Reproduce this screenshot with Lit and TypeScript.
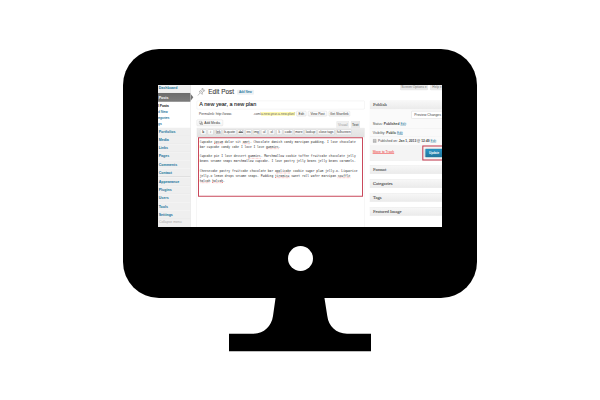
import { LitElement, html, css, svg } from "lit";
import { customElement } from "lit/decorators.js";
import { classMap } from "lit/directives/class-map.js";

const MENU_TOP = ["Portfolios", "Media", "Links", "Pages", "Comments", "Contact"];
const MENU_BOTTOM = ["Appearance", "Plugins", "Users", "Tools", "Settings"];

@customElement("admin-menu")
class AdminMenu extends LitElement {
  static styles = css`
    :host { display: block; width: 98px; height: 427px; background: #efefef; box-sizing: border-box;
      border-right: 1px solid #d8d8d8; color: #21759b; font-size: 10.8px; font-weight: bold; }
    .item { height: 24.4px; line-height: 24.4px; padding-left: 2px; box-sizing: border-box;
      border-top: 1px solid #f9f9f9; border-bottom: 1px solid #e3e3e3; display: flex; align-items: center; }
    .dash { height: 24px; padding-bottom: 6px; }
    .current { position: relative; height: 26px; display: flex; align-items: center; padding-left: 2px; color: #fff;
      background: linear-gradient(#6b6b6b, #7c7c7c); }
    .current::after { content: ""; position: absolute; left: 98px; top: 3px; border-left: 8px solid #747474;
      border-top: 10px solid transparent; border-bottom: 10px solid transparent; }
    .sub { background: #fff; height: 78px; padding-top: 3px; box-sizing: border-box; font-weight: normal; font-size: 10.2px;
      overflow: hidden; -webkit-text-stroke: 0.25px; }
    .sub div { height: 18px; line-height: 18px; white-space: nowrap; }
    .sub .all { color: #333; font-weight: bold; font-size: 9.8px; }
    .gap { height: 4px; background: #f1f1f1; border-top: 1px solid #d2d2d2; box-sizing: border-box; }
    .collapse { color: #aaa; font-weight: normal; font-size: 10.2px; padding-left: 3px; line-height: 24px; }
  `;
  render() {
    return html`
      <div class="item dash">Dashboard</div>
      <div class="current">Posts</div>
      <div class="sub">
        <div class="all">l Posts</div>
        <div>d New</div>
        <div>egories</div>
        <div>gs</div>
      </div>
      ${MENU_TOP.map((m) => html`<div class="item">${m}</div>`)}
      <div class="gap"></div>
      ${MENU_BOTTOM.map((m) => html`<div class="item">${m}</div>`)}
      <div class="collapse">Collapse menu</div>
    `;
  }
}

const TAGS: [string, number, string?][] = [
  ["b", 19, "bold"], ["i", 18, "ital"], ["link", 20, "under"], ["b-quote", 40], ["del", 19, "strike"],
  ["ins", 19], ["img", 20], ["ul", 19], ["ol", 19], ["li", 18], ["code", 28], ["more", 27],
  ["lookup", 35], ["close tags", 51], ["fullscreen", 47],
];

const POST = [
  html`Cupcake <u>ipsum</u> dolor sit <u>amet</u>. Chocolate danish candy marzipan pudding. I love chocolate`,
  html`bar cupcake candy cake I love I love <u>gummies</u>.`,
  html``,
  html`Cupcake pie I love dessert <u>gummies</u>. Marshmallow cookie toffee fruitcake chocolate jelly`,
  html`beans sesame snaps marshmallow cupcake. I love pastry jelly beans jelly beans caramels.`,
  html``,
  html`Cheesecake pastry fruitcake chocolate bar <u>applicake</u> cookie sugar plum jelly-o. Liquorice`,
  html`jelly-o lemon drops sesame snaps. Pudding <u>tiramisu</u> sweet roll wafer marzipan <u>soufflé</u>`,
  html`<u>halvah</u> <u>halvah</u>.`,
];

@customElement("post-editor")
class PostEditor extends LitElement {
  static styles = css`
    :host { display: block; width: 504px; color: #333; font-size: 9.6px; }
    .head { display: flex; align-items: center; height: 40px; padding-top: 2px; box-sizing: border-box; }
    .pin { width: 24px; height: 26px; margin: 0 9px 0 2px; }
    h1 { font: 19.2px "Liberation Sans", sans-serif; margin: 0 9px 0 0; color: #3c3c3c; -webkit-text-stroke: 0.3px; }
    .new { background: #eef2f5; color: #21759b; font-size: 9.6px; padding: 0 6px; height: 15px; line-height: 15px;
      border-radius: 3px; -webkit-text-stroke: 0.2px; }
    .title { margin-top: 7px; height: 26px; line-height: 22px; box-sizing: border-box; border: 1px solid #e3e3e3; border-radius: 3px;
      padding-left: 7px; font-size: 16.6px; color: #222; white-space: nowrap; -webkit-text-stroke: 0.3px; }
    .perma { display: flex; align-items: center; height: 26px; padding-left: 7px; white-space: nowrap; color: #444; }
    .url { width: 163px; font-size: 10px; }
    .dots { width: 23px; }
    .slug { background: #fffaaf; color: #666; width: 102px; }
    .btn { box-sizing: border-box; border: 1px solid #ccc; border-radius: 3px; background: linear-gradient(#fff, #f4f4f4);
      color: #333; white-space: nowrap; text-align: center; }
    .perma .btn { height: 16px; line-height: 14px; margin-right: 5px; flex: none; }
    .e { width: 30px; margin-left: 4px; } .v { width: 57px; } .s { width: 64px; }
    .bar { display: flex; height: 30px; padding-top: 5px; box-sizing: border-box; }
    .media { width: 79px; height: 19px; display: flex; align-items: center; gap: 4px; padding-left: 5px; font-size: 9.9px; }
    .media svg { width: 13px; height: 13px; }
    .tabs { margin: 4px 14px 0 auto; display: flex; gap: 4px; }
    .tab { height: 21px; box-sizing: border-box; line-height: 21px; font-size: 10.5px; text-align: center; border: 1px solid #ddd; border-bottom: 0;
      border-radius: 3px 3px 0 0; background: #efefef; color: #999; width: 39px; }
    .tab.on { width: 28px; background: #e9e9e9; color: #333; }
    .tools { display: flex; gap: 4px; align-items: flex-start; height: 28px; padding: 3px 0 0 9px; box-sizing: border-box;
      background: linear-gradient(#ebebeb, #e2e2e2); border: 1px solid #dedede; }
    .tools .btn { height: 17px; line-height: 15px; font-size: 9.6px; flex: none; border-color: #ccc; }
    .bold { font-weight: bold; } .ital { font-style: italic; }
    .under { text-decoration: underline; } .strike { text-decoration: line-through; }
    .area { height: 271px; box-sizing: border-box; border: 1px solid #e6e6e6; border-top: 0; padding: 0 4px 0 3px; }
    .text { height: 178px; box-sizing: border-box; border: 3px solid #c9485b; padding: 3px 0 0 2px;
      font: 8.95px/14.6px "DejaVu Sans Mono", monospace; color: #333; white-space: pre; }
    .text div { height: 14.6px; }
    .text u { text-decoration: none; border-bottom: 2px dotted #ee8c8c; }
  `;
  render() {
    return html`
      <div class="head">
        <svg class="pin" viewBox="0 0 24 26" fill="#f5f5f5" stroke="#888" stroke-width="1.5" stroke-linejoin="round">
          <path d="M1 24 L9 15" /><path d="M5 12 L15 20 L15 14 L20 10 L23 9 L15 1 L14 5 L10 9 Z" /><path d="M10 9 L15 14 M14 5 L20 10" />
        </svg>
        <h1>Edit Post</h1><span class="new">Add New</span>
      </div>
      <div class="title">A new year, a new plan</div>
      <div class="perma">
        <span class="url">Permalink: http://www.</span><span class="dots">.com/</span><span class="slug">a-new-year-a-new-plan/</span>
        <span class="btn e">Edit</span><span class="btn v">View Post</span><span class="btn s">Get Shortlink</span>
      </div>
      <div class="bar">
        <div class="btn media">
          <svg viewBox="0 0 13 13" fill="none" stroke="#777" stroke-width="1.2">
            <rect x="1" y="1" width="8" height="7" rx="1" /><circle cx="6" cy="10" r="1.7" /><path d="M7.7 10 V5 L12 6 V11" /><circle cx="10.5" cy="11" r="1.5" />
          </svg>Add Media
        </div>
        <div class="tabs"><div class="tab">Visual</div><div class="tab on">Text</div></div>
      </div>
      <div class="tools">
        ${TAGS.map(([t, w, c]) => html`<div class=${classMap({ btn: true, [c ?? "plain"]: true })} style="width:${w}px">${t}</div>`)}
      </div>
      <div class="area"><div class="text">${POST.map((line) => html`<div>${line}</div>`)}</div></div>
    `;
  }
}

@customElement("publish-side")
class PublishSide extends LitElement {
  static styles = css`
    :host { display: block; width: 217px; color: #444; font-size: 9.8px; white-space: nowrap; overflow: hidden; }
    .meta { display: flex; gap: 6px; height: 47px; padding-left: 91px; }
    .meta div { flex: none; width: 84px; height: 16px; line-height: 12px; box-sizing: border-box; text-align: center; font-size: 9.9px;
      background: #e9e9e9; border: 1px solid #ddd; border-top: 0; border-radius: 0 0 3px 3px; color: #777; }
    .meta .help { width: 46px; text-align: left; padding-left: 6px; }
    .hd { height: 26px; box-sizing: border-box; padding-left: 9px; border: 1px solid #e2e2e2; border-right: 0;
      background: linear-gradient(#f7f7f7, #ebebeb); font: 13.7px/23px "Liberation Serif", serif; color: #555; -webkit-text-stroke: 0.3px; }
    .box { height: 154px; box-sizing: border-box; border: 1px solid #e6e6e6; border-top: 0; border-right: 0; background: #fafafa;
      display: flex; flex-direction: column; }
    .preview { margin: 5px 0 0 124px; width: 100px; height: 24px; line-height: 21px; box-sizing: border-box; padding-left: 8px;
      border: 1px solid #ccc; border-radius: 3px; background: #fff; font-size: 10.2px; }
    .row { height: 26.5px; display: flex; align-items: center; padding-left: 8px; gap: 3px; border-bottom: 1px solid #eee; box-sizing: border-box; }
    .row.first { margin-top: 3px; }
    .row svg { width: 12px; height: 13px; margin-right: 1px; }
    a { color: #21759b; text-decoration: underline; }
    .foot { display: flex; height: 45px; background: #f4f4f4; }
    .trash { flex: none; color: #f03030; text-decoration: underline; width: 157px; padding: 14px 0 0 8px; box-sizing: border-box; font-size: 10.2px; }
    .mark { flex: none; width: 70px; height: 45px; box-sizing: border-box; border: 3px solid #c3364c; background: #f4f4f4; padding: 7px 0 0 5px; }
    .update { width: 64px; height: 26px; line-height: 25px; box-sizing: border-box; background: linear-gradient(#2a95c5, #21759b);
      border: 1px solid #21759b; border-radius: 3px; color: #fff; font-weight: bold; font-size: 9px; padding-left: 11px; }
    .rest { display: flex; flex-direction: column; gap: 15.6px; margin-top: 14px; }
  `;
  render() {
    return html`
      <div class="meta"><div>Screen Options ▾</div><div class="help">Help ▾</div></div>
      <div class="hd">Publish</div>
      <div class="box">
        <div class="preview">Preview Changes</div>
        <div class="row first">Status: <b>Published</b> <a>Edit</a></div>
        <div class="row">Visibility: <b>Public</b> <a>Edit</a></div>
        <div class="row">
          <svg viewBox="0 0 12 13" fill="none" stroke="#777"><rect x="1" y="2" width="10" height="10" /><path d="M1 5H11M4 0V3M8 0V3M4 5V12M8 5V12M1 8.5H11" /></svg>
          Published on: <b>Jan 1, 2013 @ 12:49</b> <a>Edit</a>
        </div>
        <div class="foot"><div class="trash">Move to Trash</div><div class="mark"><div class="update">Update</div></div></div>
      </div>
      <div class="rest">${["Format", "Categories", "Tags", "Featured Image"].map((t) => html`<div class="hd">${t}</div>`)}</div>
    `;
  }
}

@customElement("app-root")
class AppRoot extends LitElement {
  static styles = css`
    :host { display: flex; flex-direction: column; align-items: center; width: 600px; height: 400px; background: #fff;
      padding-top: 49px; box-sizing: border-box; overflow: hidden; font-family: "Liberation Sans", sans-serif; }
    .monitor { width: 354.6px; height: 248.5px; flex: none; border-radius: 36px; background: #000; display: flex; flex-direction: column;
      align-items: center; padding-top: 35.5px; box-sizing: border-box; }
    .screen { width: 284px; height: 142.3px; flex: none; overflow: hidden; background: #fff; }
    /* the tiny rotation keeps glyph baselines off the pixel grid, so line spacing stays even */
    .page { width: 852px; height: 427px; display: flex; transform: scale(0.33333) rotate(0.01deg); transform-origin: 0 0; overflow: hidden; }
    post-editor { margin: 0 15px 0 18px; flex: none; }
    admin-menu, publish-side { flex: none; }
    .button { width: 25px; height: 25px; border-radius: 50%; background: #fff; margin-top: 19px; }
    .stand { width: 142px; height: 54px; flex: none; display: block; }
  `;
  render() {
    return html`
      <div class="monitor">
        <div class="screen"><div class="page">
          <admin-menu></admin-menu><post-editor></post-editor><publish-side></publish-side>
        </div></div>
        <div class="button"></div>
      </div>
      <svg class="stand" viewBox="0 0 142 54">
        ${svg`<path d="M46.7 -1 L44 18 C42.5 28 35 35.7 25 35.7 H0 V53.3 H142 V35.7 H118 C107 35.7 99.5 28 98.3 18 L95.3 -1 Z" />`}
      </svg>
    `;
  }
}
